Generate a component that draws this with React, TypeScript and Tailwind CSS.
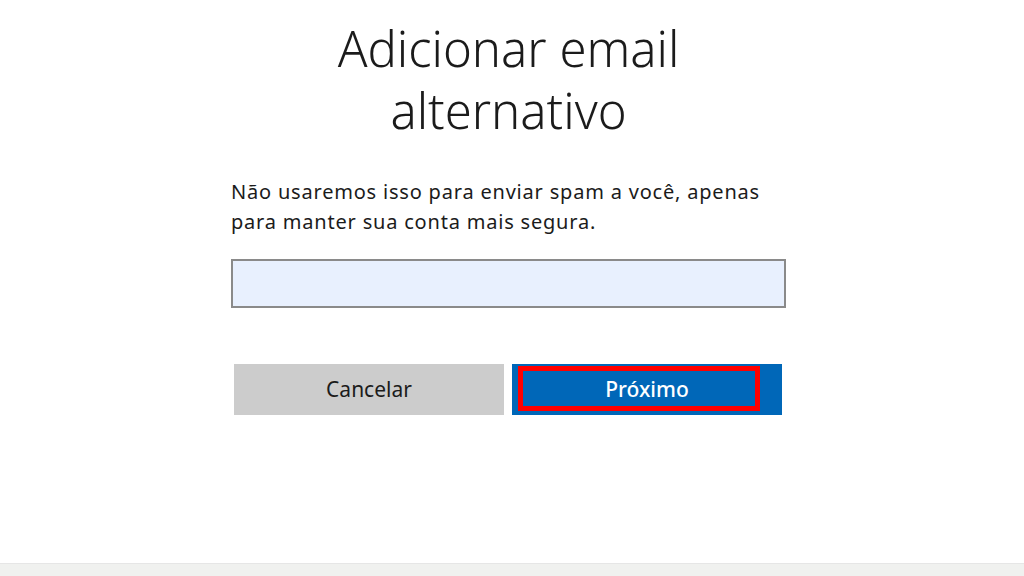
export default function App() {
  return (
    <div className="w-[1024px] h-[576px] bg-white flex flex-col overflow-hidden" style={{ fontFamily: '"Noto Sans", "Open Sans", sans-serif' }}>
      <div className="flex-1 pl-[231px]">
        <div className="w-[555px] flex flex-col">
          <h1 className="mt-[17px] text-center text-[49px] leading-[62px] font-light text-[#1b1b1b]">
            Adicionar email<br />alternativo
          </h1>
          <p className="mt-[36px] text-[20px] leading-[30px] tracking-[0.8px] text-[#1b1b1b]">
            Não usaremos isso para enviar spam a você, apenas para manter sua conta mais segura.
          </p>
          <div className="mt-[22px] h-[49px] border-2 border-[#8a8a8a] bg-[#e8f0fe]"></div>
          <div className="mt-[56px] flex gap-[8px] pl-[3px] pr-[4px]">
            <div className="w-[270px] h-[51px] bg-[#cccccc] flex items-center justify-center text-[21px] text-[#1b1b1b]">
              Cancelar
            </div>
            <div className="relative w-[270px] h-[51px] bg-[#0067b8] flex items-center justify-center text-[21px] font-medium text-white">
              Próximo
              <div className="absolute left-[6px] top-[2px] w-[242px] h-[45px] border-[5px] border-[#ff0000]"></div>
            </div>
          </div>
        </div>
      </div>
      <div className="h-[13px] bg-[#f0f1ef] border-t border-[#e6e6e6]"></div>
    </div>
  );
}
